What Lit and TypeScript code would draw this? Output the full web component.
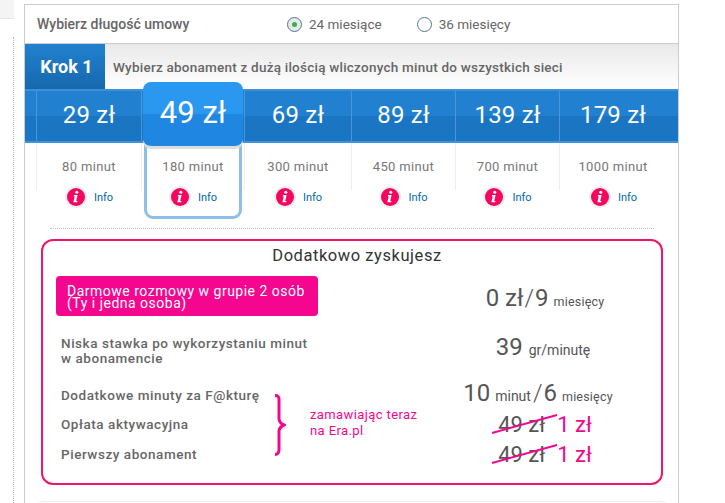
import { LitElement, html, css, svg } from "lit";
import { customElement } from "lit/decorators.js";

const plans = [
  { price: "29 zł", mins: "80 minut", w: 105 },
  { price: "49 zł", mins: "180 minut", w: 103, sel: true },
  { price: "69 zł", mins: "300 minut", w: 107 },
  { price: "89 zł", mins: "450 minut", w: 104 },
  { price: "139 zł", mins: "700 minut", w: 104 },
  { price: "179 zł", mins: "1000 minut", w: 107 },
];

@customElement("app-root")
export class AppRoot extends LitElement {
  static styles = css`
    :host { display: block; width: 725px; height: 503px; position: relative; overflow: hidden; background: #fff; font-family: Roboto, "Liberation Sans", sans-serif; color: #666; }
    .corner { position: absolute; left: 0; top: 0; width: 14px; height: 18px; background: #f4f4f4; border-bottom: 1px solid #e6e6e6; }
    .dots { position: absolute; left: 13px; top: 37px; bottom: 0; border-left: 1px dotted #bbb; }
    .panel { position: absolute; left: 24px; top: 4px; width: 653px; height: 520px; border: 1px solid #ccc; box-sizing: content-box; }
    .len { height: 38px; display: flex; align-items: center; border-bottom: 1px solid #ccc; }
    .len .t { font-size: 14px; font-weight: 500; margin-left: 12px; width: 250px; color: #666; }
    .opt { display: flex; align-items: center; gap: 7px; font-size: 13.5px; color: #666; }
    .opt + .opt { margin-left: 35px; }
    .radio { width: 15px; height: 15px; border-radius: 50%; border: 1px solid #56778f; box-sizing: border-box; display: flex; align-items: center; justify-content: center; background: #fff; }
    .radio.on { background: #e4e9ec; }
    .radio.on i { width: 5px; height: 5px; border-radius: 50%; background: #3cb043; }
    .step { height: 45px; display: flex; background: linear-gradient(#e9e9e9, #fff); }
    .krok { width: 80px; padding-left: 3px; box-sizing: border-box; background: linear-gradient(#2181cf, #1668ad); color: #fff; font-size: 18px; font-weight: 700; display: flex; align-items: center; justify-content: center; }
    .steptxt { margin-left: 8px; align-self: center; font-size: 13.5px; font-weight: 500; letter-spacing: 0.23px; color: #666; }
    .bar { height: 50px; display: flex; padding-left: 11px; background: linear-gradient(#2180d0 0 50%, #1a76c2 50% 100%); border-top: 2px solid #3d8fd6; border-bottom: 2px solid #4192d8; position: relative; }
    .cell { display: flex; align-items: center; justify-content: center; box-sizing: border-box; border-left: 1px solid #4a96d8; color: #fff; font-size: 24px; letter-spacing: 0.2px; padding-bottom: 2px; }
    .cell:last-child { border-right: 1px solid #4a96d8; }
    .sel-price { position: absolute; left: 118px; top: -9px; width: 100px; height: 64px; border-radius: 8px; background: linear-gradient(#2a97f0 0 50%, #1f87e2 50% 100%); box-shadow: 0 3px 0 #ddd; color: #fff; font-size: 31px; font-weight: 400; display: flex; align-items: center; justify-content: center; z-index: 3; padding-bottom: 3px; box-sizing: border-box; }
    .mins { display: flex; padding-left: 11px; height: 75px; position: relative; }
    .mcell { box-sizing: border-box; border-left: 1px solid #eee; height: 47px; display: flex; flex-direction: column; align-items: center; position: relative; }
    .mcell:last-child { border-right: 1px solid #eee; }
    .mtxt { margin-top: 16px; font-size: 13px; line-height: 16px; letter-spacing: 0.35px; color: #777; }
    .info { display: flex; align-items: center; gap: 7px; margin-top: 11px; font-size: 11px; color: #0068a8; height: 22px; white-space: nowrap; }
    .ic { width: 22px; height: 22px; display: block; }
    .card { position: absolute; left: 119px; top: -6px; width: 98px; height: 82px; box-sizing: border-box; border: 3px solid #8cc0e8; border-radius: 9px; z-index: 1; }
    .sep { margin: 10px 24px 0 25px; border-top: 1px dotted #bbb; }
    .box { margin: 10px 15px 0 16px; height: 246px; box-sizing: border-box; border: 2px solid #f0146a; border-radius: 12px; position: relative; padding: 5px 13px 0 13px; }
    h3 { margin: 0; font-size: 16.5px; line-height: 20px; font-weight: 400; text-align: center; color: #333; letter-spacing: 0.55px; padding-left: 10px; }
    .rows { display: flex; }
    .left { width: 262px; flex: none; }
    .right { flex: 1; padding-left: 124px; display: flex; flex-direction: column; box-sizing: border-box; }
    .tag { margin-top: 10px; width: 262px; height: 40px; box-sizing: border-box; background: #f5068f; border-radius: 4px; color: #fff; font-size: 14px; line-height: 12px; padding: 9px 0 0 11px; letter-spacing: 0.5px; }
    .l { font-size: 13.5px; font-weight: 500; line-height: 15px; letter-spacing: 0.55px; color: #666; padding-left: 5px; white-space: nowrap; }
    .r { color: #555; font-size: 24px; line-height: 28px; display: flex; justify-content: center; align-items: baseline; white-space: nowrap; }
    .r small { font-size: 14px; margin: 0 4px; }
    .r small.sm { font-size: 12.5px; letter-spacing: 0.2px; margin: 0 0 0 5px; }
    .r .sl { margin: 0 1px; font-weight: 300; }
    .price { font-size: 22px; }
    .pink { color: #f5068f; margin-left: 12px; }
    .strike { position: relative; display: inline-block; }
    .strike svg { position: absolute; left: -6px; top: 3px; width: 66px; height: 20px; overflow: visible; }
    .brace { position: absolute; left: 231px; top: 153px; width: 12px; height: 62px; }
    .note { position: absolute; left: 267px; top: 166px; font-size: 13px; line-height: 16px; color: #f5068f; letter-spacing: 0.4px; }
    .next { margin: 16px 12px 0 13px; height: 12px; border: 1px solid #eee; border-bottom: 0; border-radius: 5px 5px 0 0; }
  `;

  private infoIcon() {
    return svg`<svg class="ic" viewBox="0 0 22 22"><circle cx="11" cy="11" r="11" fill="#eee"/><circle cx="11" cy="11" r="9" fill="#f5065f"/><circle cx="11.8" cy="6.2" r="1.5" fill="#fff"/><path d="M9 9h3.600l-1.400 6h1.200l-.3 1.200H8.400l1.300-6H8.800z" fill="#fff"/></svg>`;
  }

  private strike() {
    return svg`<svg viewBox="0 0 66 20"><line x1="0" y1="19" x2="65" y2="1" stroke="#f5068f" stroke-width="2"/></svg>`;
  }

  render() {
    return html`
      <div class="corner"></div>
      <div class="dots"></div>
      <div class="panel">
        <div class="len">
          <div class="t">Wybierz długość umowy</div>
          <div class="opt"><span class="radio on"><i></i></span>24 miesiące</div>
          <div class="opt"><span class="radio"></span>36 miesięcy</div>
        </div>
        <div class="step">
          <div class="krok">Krok 1</div>
          <div class="steptxt">Wybierz abonament z dużą ilością wliczonych minut do wszystkich sieci</div>
        </div>
        <div class="bar">
          ${plans.map((p) => html`<div class="cell" style="width:${p.w}px">${p.sel ? "" : p.price}</div>`)}
          <div class="sel-price">49 zł</div>
        </div>
        <div class="mins">
          ${plans.map((p) => html`<div class="mcell" style="width:${p.w}px">
            <div class="mtxt">${p.mins}</div>
            <div class="info">${this.infoIcon()}Info</div>
          </div>`)}
          <div class="card"></div>
        </div>
        <div class="sep"></div>
        <div class="box">
          <h3>Dodatkowo zyskujesz</h3>
          <div class="rows">
            <div class="left">
              <div class="tag">Darmowe rozmowy w grupie 2 osób<br />(Ty i jedna osoba)</div>
              <div class="l" style="margin-top:20px">Niska stawka po wykorzystaniu minut<br />w abonamencie</div>
              <div class="l" style="margin-top:22px">Dodatkowe minuty za F@kturę</div>
              <div class="l" style="margin-top:14px">Opłata aktywacyjna</div>
              <div class="l" style="margin-top:15px">Pierwszy abonament</div>
            </div>
            <div class="right">
              <div class="r" style="margin-top:18px">0 zł<span class="sl">/</span>9<small class="sm">miesięcy</small></div>
              <div class="r" style="margin-top:17px">39<small style="margin-left:6px">gr/minutę</small></div>
              <div class="r" style="margin-top:15px;margin-left:-14px">10<small style="margin-left:5px;margin-right:1px">minut</small><span class="sl">/</span>6<small class="sm">miesięcy</small></div>
              <div class="r price" style="margin-top:0">
                <span class="strike">49 zł${this.strike()}</span><span class="pink">1 zł</span>
              </div>
              <div class="r price" style="margin-top:2px">
                <span class="strike">49 zł${this.strike()}</span><span class="pink">1 zł</span>
              </div>
            </div>
          </div>
          <svg class="brace" viewBox="0 0 12 62"><path d="M1 1.500c3 0 4 1 4 4v19c0 2.500 1.500 5 5 6.500-3.500 1.500-5 4-5 6.500v18c0 3-1 5-4 5" fill="none" stroke="#f5068f" stroke-width="3"/></svg>
          <div class="note">zamawiając teraz<br />na Era.pl</div>
        </div>
        <div class="next"></div>
      </div>
    `;
  }
}
